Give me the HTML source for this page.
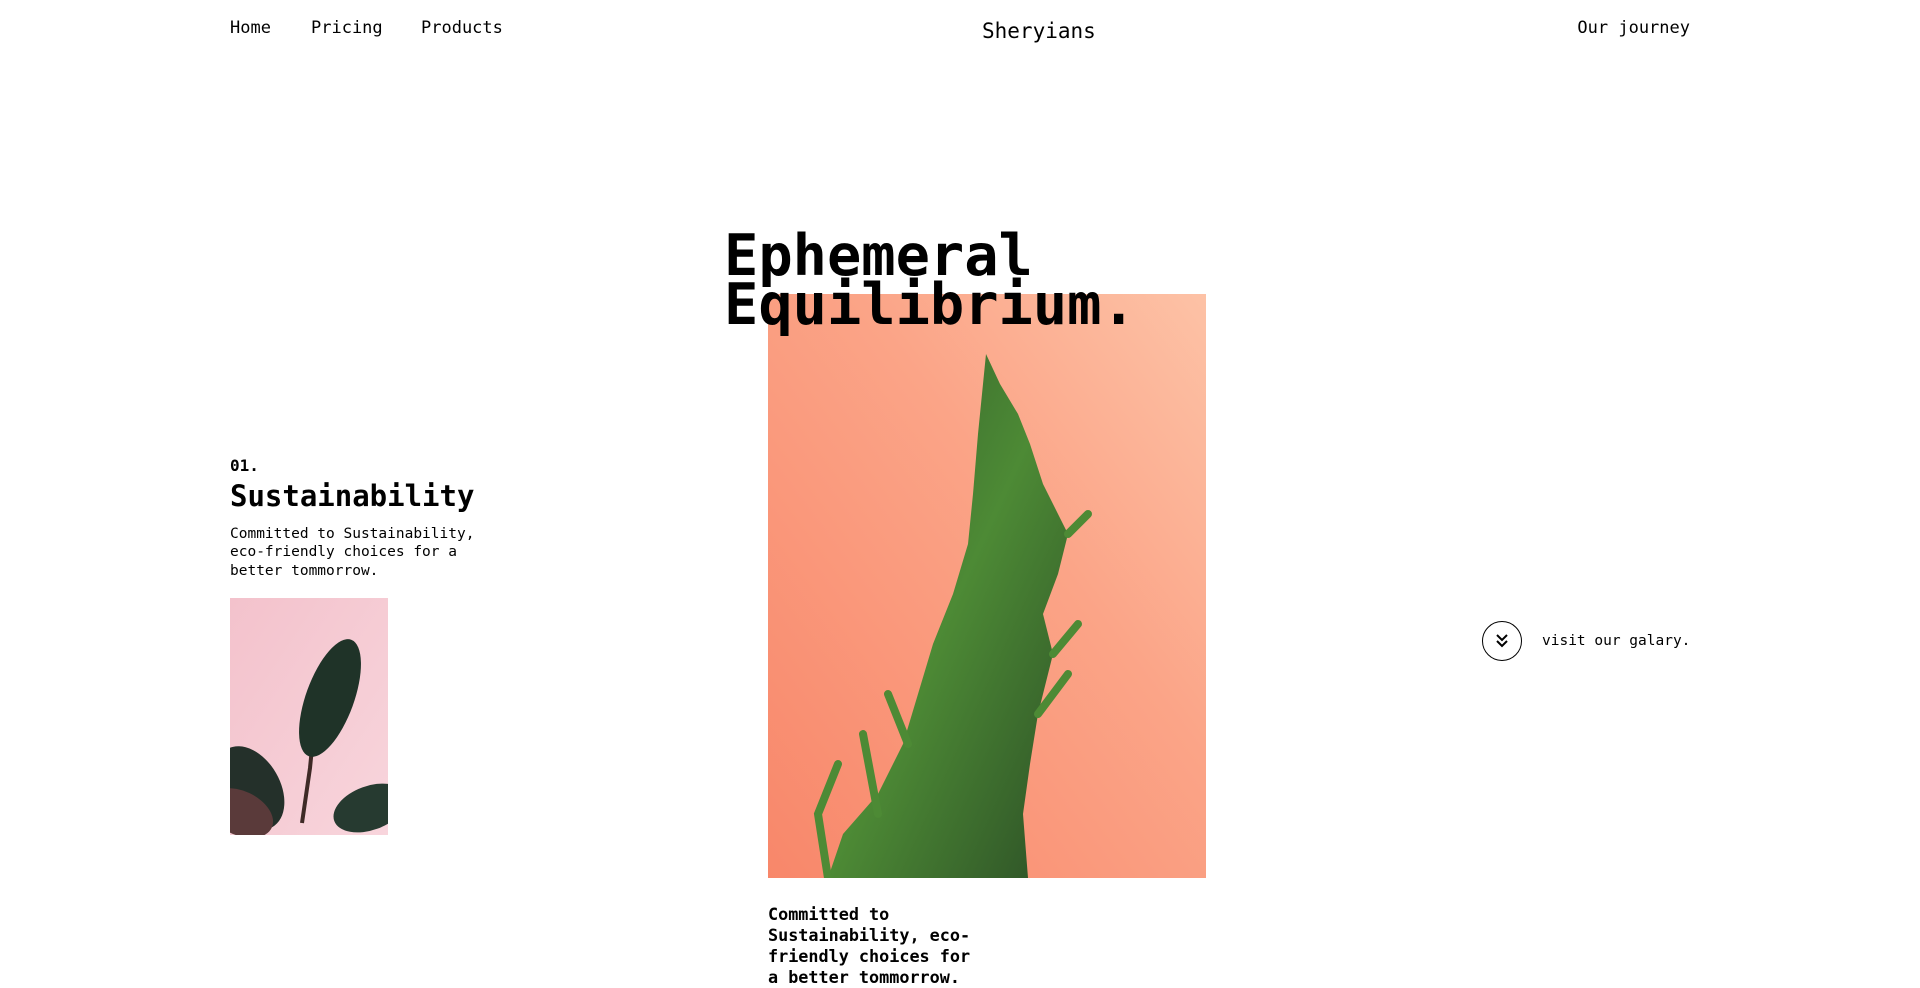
<!DOCTYPE html>
<html><head><meta charset="utf-8"><style>
*{margin:0;padding:0;box-sizing:border-box}
html,body{width:1920px;height:972px;overflow:hidden;background:#fff;color:#000;font-family:"DejaVu Sans Mono","Liberation Mono",monospace}
.a{position:absolute;white-space:nowrap}
.nav{font-size:17px;top:18px}
</style></head><body>
<div class="a nav" style="left:230px">Home</div>
<div class="a nav" style="left:311px">Pricing</div>
<div class="a nav" style="left:421px">Products</div>
<div class="a" style="left:982px;top:19px;font-size:21px">Sheryians</div>
<div class="a nav" style="right:230px">Our journey</div>

<div class="a" style="left:768px;top:294px;width:438px;height:584px;overflow:hidden">
<svg width="438" height="584" viewBox="0 0 438 584">
<defs><linearGradient id="g" x1="0" y1="1" x2="1" y2="0"><stop offset="0" stop-color="#f8876a"/><stop offset="0.6" stop-color="#fba487"/><stop offset="1" stop-color="#fdc2a6"/></linearGradient>
<linearGradient id="p" x1="0" y1="0" x2="1" y2="1"><stop offset="0" stop-color="#2f5a2a"/><stop offset="0.5" stop-color="#4d8a35"/><stop offset="1" stop-color="#2c4f26"/></linearGradient></defs>
<rect width="438" height="584" fill="url(#g)"/>
<path d="M218 60 L232 90 L250 120 L262 150 L275 190 L300 240 L290 280 L275 320 L285 360 L270 420 L262 470 L255 520 L260 584 L60 584 L75 540 L110 500 L135 450 L150 400 L165 350 L185 300 L200 250 L205 200 L210 140 Z" fill="url(#p)"/>
<path d="M60 584 L50 520 L70 470 M110 520 L95 440 M140 450 L120 400 M270 420 L300 380 M285 360 L310 330 M300 240 L320 220" stroke="#4d8a35" stroke-width="8" fill="none" stroke-linecap="round"/>
</svg></div>

<div class="a" style="left:724px;top:232px;font-size:57px;font-weight:bold;line-height:49px">Ephemeral<br>Equilibrium.</div>

<div class="a" style="left:230px;top:456px;font-size:16px;font-weight:bold">01.</div>
<div class="a" style="left:230px;top:479px;font-size:29px;font-weight:bold">Sustainability</div>
<div class="a" style="left:230px;top:525px;font-size:14.5px;line-height:18.4px">Committed to Sustainability,<br>eco-friendly choices for a<br>better tommorrow.</div>

<div class="a" style="left:230px;top:598px;width:158px;height:237px;overflow:hidden">
<svg width="158" height="237" viewBox="0 0 158 237">
<defs><linearGradient id="k" x1="0" y1="0" x2="1" y2="1"><stop offset="0" stop-color="#f3c2cc"/><stop offset="1" stop-color="#f8d5dc"/></linearGradient></defs>
<rect width="158" height="237" fill="url(#k)"/>
<path d="M72 225 L80 170 L85 120" stroke="#3e2a26" stroke-width="4" fill="none"/>
<ellipse cx="100" cy="100" rx="24" ry="62" transform="rotate(20 100 100)" fill="#1f3328"/>
<ellipse cx="20" cy="190" rx="30" ry="45" transform="rotate(-30 20 190)" fill="#24302a"/>
<ellipse cx="10" cy="215" rx="35" ry="22" transform="rotate(25 10 215)" fill="#5a3a3a"/>
<ellipse cx="140" cy="210" rx="38" ry="22" transform="rotate(-20 140 210)" fill="#263a30"/>
</svg></div>

<div class="a" style="left:1482px;top:621px;width:40px;height:40px;border:1.3px solid #000;border-radius:50%">
<svg width="38" height="38" viewBox="0 0 38 38"><path d="M14 13 L19 18 L24 13 M14 19 L19 24 L24 19" stroke="#000" stroke-width="2" fill="none"/></svg></div>
<div class="a" style="left:1542px;top:633px;font-size:14.5px">visit our galary.</div>

<div class="a" style="left:768px;top:904px;font-size:16.8px;font-weight:bold;line-height:21px;white-space:normal;width:215px">Committed to Sustainability, eco-friendly choices for a better tommorrow.</div>
</body></html>
